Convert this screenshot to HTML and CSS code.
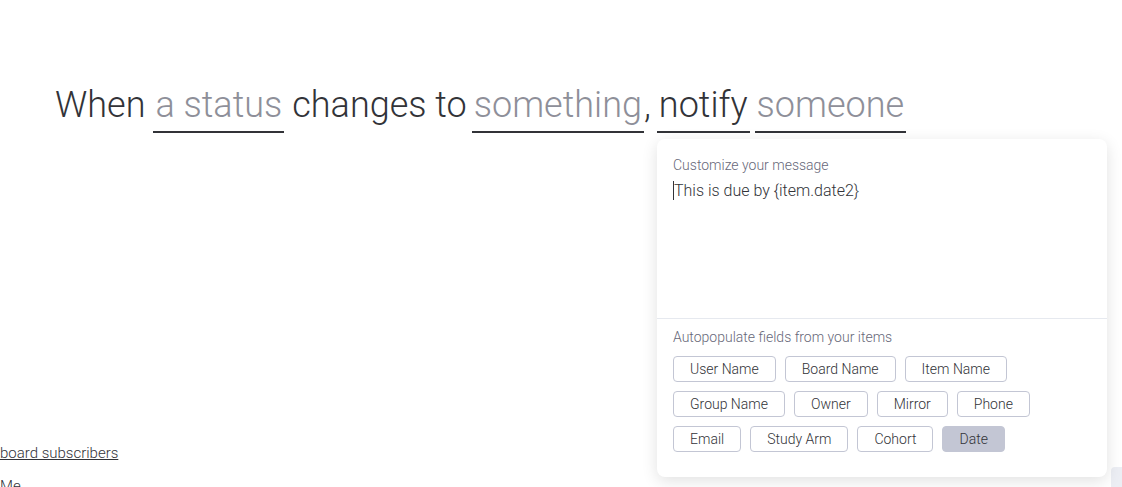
FILE: index.html
```html
<!DOCTYPE html>
<html>
<head>
<meta charset="utf-8">
<link rel="stylesheet" href="styles.css">
</head>
<body>
<div class="page">
  <div class="sentence"><span class="word">When</span><span class="slot placeholder s1">a status</span><span class="word w2">changes to</span><span class="slot placeholder s2">something</span><span class="word">,</span><span class="slot s3">notify</span><span class="slot placeholder s4">someone</span></div>

  <div class="recipients">
    <div class="recipient link">board subscribers</div>
    <div class="recipient">Me</div>
  </div>

  <div class="scroll-stub"></div>

  <div class="popup">
    <div class="message">
      <div class="label">Customize your message</div>
      <div class="text"><span class="caret"></span>This is due by {item.date2}</div>
    </div>
    <div class="fields">
      <div class="label">Autopopulate fields from your items</div>
      <div class="chips">
        <div class="chip-row">
          <span class="chip">User Name</span>
          <span class="chip">Board Name</span>
          <span class="chip">Item Name</span>
        </div>
        <div class="chip-row">
          <span class="chip">Group Name</span>
          <span class="chip">Owner</span>
          <span class="chip">Mirror</span>
          <span class="chip">Phone</span>
        </div>
        <div class="chip-row">
          <span class="chip">Email</span>
          <span class="chip">Study Arm</span>
          <span class="chip">Cohort</span>
          <span class="chip active">Date</span>
        </div>
      </div>
    </div>
  </div>
</div>
</body>
</html>
```

FILE: styles.css
```css
* { box-sizing: border-box; }
html, body {
  margin: 0;
  padding: 0;
  background: #ffffff;
  width: 1122px;
  height: 487px;
  overflow: hidden;
}
body {
  font-family: Roboto, "Liberation Sans", sans-serif;
  color: #323338;
}
.page {
  position: relative;
  width: 1122px;
  height: 487px;
  overflow: hidden;
}
.sentence {
  padding: 84px 0 0 55px;
  display: flex;
  align-items: flex-start;
  font-size: 36px;
  font-weight: 300;
  line-height: 42px;
  color: #323338;
  white-space: nowrap;
}
.word { line-height: 42px; }
.w2 { margin-left: 8px; }
.slot {
  display: inline-block;
  padding: 0 2px 5px;
  border-bottom: 2px solid #323338;
  line-height: 42px;
}
.slot.placeholder { color: #8e8f99; }
.s1 { margin-left: 8px; }
.s2 { margin-left: 5px; }
.s3 { margin-left: 6px; }
.s4 { margin-left: 5px; }

.recipients {
  margin-top: 311px;
  font-size: 15px;
  font-weight: 300;
  line-height: 18px;
  color: #323338;
}
.recipient { margin-bottom: 15px; white-space: nowrap; }
.recipient.link { text-decoration: underline; }

.scroll-stub {
  position: absolute;
  left: 1111px;
  top: 467px;
  width: 20px;
  height: 30px;
  background: #eceef4;
  border-radius: 4px 0 0 0;
}

.popup {
  position: absolute;
  left: 657px;
  top: 139px;
  width: 450px;
  height: 338px;
  background: #ffffff;
  border-radius: 8px;
  box-shadow: 0 4px 16px rgba(0, 0, 0, 0.12);
  display: flex;
  flex-direction: column;
}
.message {
  height: 180px;
  padding: 18px 16px 0;
  border-bottom: 1px solid #e6e9ef;
}
.label {
  font-size: 14px;
  line-height: 17px;
  color: #676879;
  font-weight: 300;
}
.text {
  margin-top: 7px;
  font-size: 16px;
  font-weight: 300;
  line-height: 19px;
  color: #323338;
}
.caret {
  display: inline-block;
  width: 1px;
  height: 19px;
  background: #323338;
  vertical-align: top;
}
.fields {
  padding: 10px 16px 0;
}
.chips {
  margin-top: 10px;
  display: flex;
  flex-direction: column;
  gap: 9px;
}
.chip-row {
  display: flex;
  gap: 9px;
}
.chip {
  height: 26px;
  padding: 0 16px;
  border: 1px solid #c3c6d4;
  border-radius: 4px;
  font-size: 14px;
  line-height: 24px;
  color: #323338;
  white-space: nowrap;
  font-weight: 300;
}
.chip.active {
  background: #c3c6d4;
  border-color: #c3c6d4;
}
```
